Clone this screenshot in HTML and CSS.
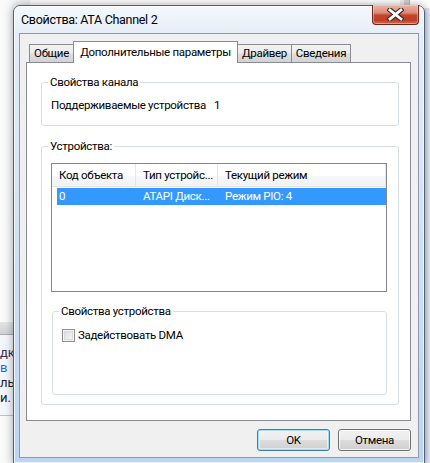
FILE: index.html
```html
<!DOCTYPE html>
<html lang="ru">
<head>
    <meta charset="UTF-8">
    <meta name="viewport" content="width=device-width, initial-scale=1.0">
    <title>Свойства: ATA Channel 2</title>
    <link rel="stylesheet" href="styles.css">
</head>
<body>
    <!-- окна позади диалога -->
    <div class="back-left">
        <div class="back-gap"></div>
        <div class="back-bar"></div>
        <div class="back-doc">
            <p class="purple">дке</p>
            <p class="blue">в</p>
            <p>ль</p>
            <p>и.</p>
        </div>
    </div>
    <div class="back-right">
        <div class="back-lines"></div>
        <div class="back-frame"></div>
    </div>

    <div class="window">
        <div class="titlebar">
            <span class="title">Свойства: ATA Channel 2</span>
            <button class="close" aria-label="Закрыть">
                <svg width="17" height="13" viewBox="0 0 17 13">
                    <path d="M3 2 L14 11 M14 2 L3 11" stroke="#3b2b2b" stroke-width="5" stroke-linecap="square"/>
                    <path d="M3 2 L14 11 M14 2 L3 11" stroke="#fff" stroke-width="2.8" stroke-linecap="square"/>
                </svg>
            </button>
        </div>

        <div class="client">
            <div class="tabs">
                <div class="tab tab-general">Общие</div>
                <div class="tab tab-advanced active">Дополнительные параметры</div>
                <div class="tab tab-driver">Драйвер</div>
                <div class="tab tab-details">Сведения</div>
            </div>

            <div class="page">
                <fieldset class="group channel">
                    <legend>Свойства канала</legend>
                    <div class="prop-row">
                        <span>Поддерживаемые устройства</span>
                        <span>1</span>
                    </div>
                </fieldset>

                <fieldset class="group devices">
                    <legend>Устройства:</legend>
                    <div class="listview">
                        <div class="lv-head">
                            <div class="lv-col">Код объекта</div>
                            <div class="lv-col">Тип устройс...</div>
                            <div class="lv-col">Текущий режим</div>
                        </div>
                        <div class="lv-row selected">
                            <div class="lv-cell">0</div>
                            <div class="lv-cell">ATAPI Диск...</div>
                            <div class="lv-cell">Режим PIO: 4</div>
                        </div>
                    </div>

                    <fieldset class="group device-props">
                        <legend>Свойства устройства</legend>
                        <label class="check">
                            <span class="check-box"></span>
                            Задействовать DMA
                        </label>
                    </fieldset>
                </fieldset>
            </div>

            <div class="buttons">
                <button class="btn btn-default">OK</button>
                <button class="btn">Отмена</button>
            </div>
        </div>
    </div>
</body>
</html>
```

FILE: styles.css
```css
body {
    margin: 0;
    width: 430px;
    height: 463px;
    overflow: hidden;
    position: relative;
    background: #fdfdfd;
    font-family: Roboto, "Liberation Sans", Arial, sans-serif;
    font-size: 11.5px;
    letter-spacing: -0.3px;
    color: #000;
}

/* окна на заднем плане */
.back-left {
    position: absolute;
    left: 0;
    top: 0;
    width: 30px;
    height: 463px;
    display: flex;
    flex-direction: column;
    background: linear-gradient(90deg, #fbfbfb, #eceef1);
}

.back-gap {
    height: 322px;
}

.back-bar {
    height: 12px;
    background: linear-gradient(#e4e4e4, #cfd1d4);
    border-bottom: 1px solid #a9adb3;
}

.back-doc {
    height: 70px;
    background: #f3f6fb;
    padding-top: 10px;
    border-bottom: 1px solid #b8c4d4;
}

.back-doc p {
    margin: 0;
    line-height: 15px;
    font-size: 13px;
    letter-spacing: 0;
    color: #1a1a2e;
}

.back-doc .purple { color: #3b2a5a; }
.back-doc .blue { color: #1f6fd1; }

.back-right {
    position: absolute;
    right: 0;
    top: 0;
    width: 30px;
    height: 463px;
    background: #ededed;
}

.back-lines {
    height: 8px;
    border-left: 1px solid #b7b7b7;
    margin-left: 9px;
    box-shadow: -5px 0 0 #d0d0d0;
    background: #fff;
}

.back-frame {
    margin-left: 25px;
    height: 455px;
    background: linear-gradient(90deg, #c9ddf3, #e9eef5);
}

/* диалог */
.window {
    position: absolute;
    left: 13px;
    top: 5px;
    z-index: 2;
    width: 412px;
    height: 459px;
    box-sizing: border-box;
    border: 1px solid #53616f;
    border-radius: 7px 7px 0 0;
    padding: 0 5px 5px;
    background: linear-gradient(180deg, #f4f8fc 0, #e4edf8 30px, #cddff3 60%, #bcd5f1 100%);
    box-shadow: 0 0 9px rgba(0, 0, 0, 0.35), inset 0 0 0 1px rgba(255, 255, 255, 0.7);
    display: flex;
    flex-direction: column;
}

.titlebar {
    height: 27px;
    display: flex;
    align-items: center;
}

.title {
    padding-left: 2px;
    line-height: 15px;
    font-size: 12.5px;
    letter-spacing: -0.3px;
}

.close {
    margin-left: auto;
    align-self: flex-start;
    margin-top: -1px;
    width: 47px;
    height: 20px;
    padding: 0;
    border: 1px solid #6e271c;
    border-top: none;
    border-radius: 0 0 4px 4px;
    background: linear-gradient(180deg, #eab2a4 0, #dc8c78 40%, #c2452e 55%, #bf3d25 80%, #d56a50 100%);
    box-shadow: inset 0 0 0 1px rgba(255, 220, 210, 0.45);
    display: flex;
    align-items: center;
    justify-content: center;
}

.close svg {
    display: block;
}

.client {
    flex: 1;
    background: #f0f0f0;
    border: 1px solid #8b9bad;
    padding: 0 7px 0 6px;
    display: flex;
    flex-direction: column;
}

/* вкладки */
.tabs {
    height: 29px;
    margin-bottom: -1px;
    padding-left: 3px;
    display: flex;
    align-items: flex-end;
    position: relative;
    z-index: 1;
}

.tab {
    box-sizing: border-box;
    height: 18px;
    margin-bottom: 1px;
    padding-top: 1px;
    line-height: 15px;
    text-align: center;
    white-space: nowrap;
    border: 1px solid #898c95;
    border-bottom: none;
    background: linear-gradient(180deg, #f3f3f3 0, #ebebeb 45%, #dedede 55%, #d2d2d2 100%);
}

.tab + .tab {
    margin-left: -1px;
}

.tab-general { width: 45px; }
.tab-advanced { width: 165px; }
.tab-driver { width: 55px; }
.tab-details { width: 60px; }

.tab.active {
    height: 22px;
    margin-bottom: 0;
    padding-top: 3px;
    background: #fff;
    position: relative;
    z-index: 1;
}

.page {
    height: 359px;
    box-sizing: border-box;
    background: #fff;
    border: 1px solid #898c95;
    padding: 0 11px 0 14px;
}

/* группы */
.group {
    margin: 0;
    min-width: 0;
    border: 1px solid #d5dfe5;
    border-radius: 3px;
    padding: 0 11px 0 9px;
}

.group legend {
    margin-left: -3px;
    padding: 0 2px;
    line-height: 15px;
}

.channel {
    margin-top: 12px;
    padding-top: 8px;
    padding-bottom: 12px;
}

.prop-row {
    display: grid;
    grid-template-columns: 163px auto;
    line-height: 15px;
    white-space: nowrap;
}

.devices {
    margin-top: 13px;
    padding-top: 9px;
    padding-bottom: 9px;
}

.listview {
    height: 129px;
    box-sizing: border-box;
    border: 1px solid #828790;
    background: #fff;
}

.lv-head {
    height: 23px;
    box-sizing: border-box;
    display: grid;
    grid-template-columns: 84px 82px 1fr;
    border-bottom: 1px solid #e5e5e5;
    background: linear-gradient(180deg, #fff 0, #fff 55%, #f7f8fa 55%, #f2f3f5 100%);
}

.lv-col {
    padding-left: 7px;
    line-height: 22px;
    border-right: 1px solid #e5e5e5;
    white-space: nowrap;
    overflow: hidden;
}

.lv-row {
    margin: 1px 0 0 5px;
    height: 17px;
    display: grid;
    grid-template-columns: 79px 82px 1fr;
    line-height: 17px;
}

.lv-row .lv-cell {
    padding-left: 7px;
    white-space: nowrap;
    overflow: hidden;
}

.lv-row .lv-cell:first-child {
    padding-left: 2px;
}

.lv-row.selected {
    background: #3399ff;
    color: #fff;
}

.device-props {
    margin: 12px 0 0 1px;
    padding-top: 10px;
    padding-bottom: 52px;
}

.check {
    display: flex;
    align-items: center;
    gap: 3px;
    height: 13px;
    line-height: 15px;
}

.check-box {
    width: 13px;
    height: 13px;
    box-sizing: border-box;
    border: 1px solid #8e8f8f;
    background: linear-gradient(135deg, #d4d6d9 0, #eceef0 60%, #fafafa 100%);
    box-shadow: inset 0 0 0 1px #f4f4f4, inset 0 0 0 2px #d9dcdf;
}

/* кнопки */
.buttons {
    margin-top: 8px;
    display: flex;
    justify-content: flex-end;
    gap: 8px;
}

.btn {
    width: 73px;
    height: 22px;
    padding: 0;
    font: inherit;
    letter-spacing: inherit;
    color: #000;
    border: 1px solid #707070;
    border-radius: 3px;
    background: linear-gradient(180deg, #f2f2f2 0, #ebebeb 48%, #dddddd 52%, #cfcfcf 100%);
    box-shadow: inset 0 0 0 1px rgba(255, 255, 255, 0.75);
}

.btn-default {
    border-color: #3c7fb1;
    box-shadow: inset 0 0 0 1px #9fdcf8, inset 0 0 0 2px rgba(255, 255, 255, 0.5);
}
```
